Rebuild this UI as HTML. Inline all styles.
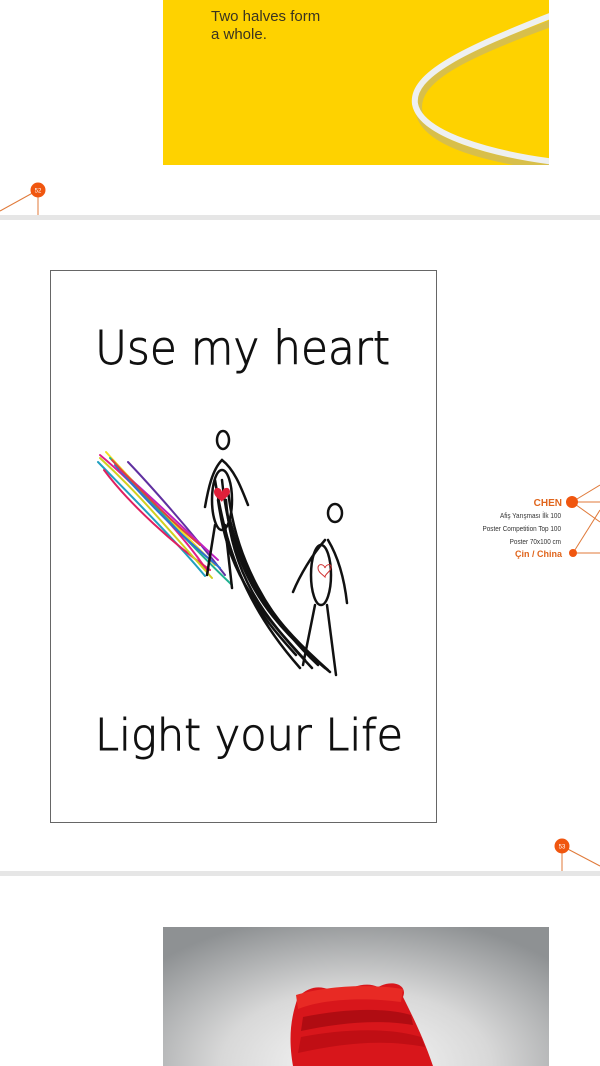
<!DOCTYPE html>
<html><head><meta charset="utf-8"><style>
html,body{margin:0;padding:0;background:#fff;}
body{width:600px;height:1066px;position:relative;overflow:hidden;font-family:"Liberation Sans",sans-serif;}
.abs{position:absolute;}
</style></head><body>
<div class="abs" style="left:163px;top:0;width:386px;height:165px;background:#FED200;overflow:hidden;">
  <div class="abs" style="left:48px;top:8px;font-size:15px;line-height:17.5px;color:#3a3420;">Two halves form<br>a whole.</div>
  <svg class="abs" style="left:0;top:0" width="386" height="165">
    <path d="M392 22 C300 55 250 80 256 112 C262 145 330 160 392 168" fill="none" stroke="#d8bf4a" stroke-width="7"/>
    <path d="M392 14 C300 50 248 75 252 104 C258 135 330 154 392 162" fill="none" stroke="#eef0f0" stroke-width="6"/>
  </svg>
</div>
<svg class="abs" style="left:0;top:180px" width="60" height="40">
  <line x1="38" y1="10" x2="0" y2="31" stroke="#e07a3a" stroke-width="1"/>
  <line x1="38" y1="10" x2="38" y2="36" stroke="#e07a3a" stroke-width="1"/>
  <circle cx="38" cy="10" r="7.5" fill="#f0560f"/>
  <text x="38" y="12.5" font-size="6" fill="#fff" text-anchor="middle" font-family="Liberation Sans">52</text>
</svg>
<div class="abs" style="left:0;top:215px;width:600px;height:5px;background:#e6e6e6;"></div>
<div class="abs" style="left:50px;top:270px;width:385px;height:551px;border:1px solid #666;background:#fff;"></div>
<svg class="abs" style="left:0;top:0" width="600" height="1066">
  <text x="95" y="364" font-size="46" font-family="DejaVu Sans" font-weight="200" textLength="295" lengthAdjust="spacingAndGlyphs" fill="#111" stroke="#111" stroke-width="0.9">Use my heart</text>
  <text x="95" y="750" font-size="44" font-family="DejaVu Sans" font-weight="200" textLength="308" lengthAdjust="spacingAndGlyphs" fill="#111" stroke="#111" stroke-width="0.9">Light your Life</text>
  <g fill="none" stroke-width="2" stroke-linecap="round">
    <path d="M100 455 C130 480 180 530 208 572" stroke="#e0208a"/>
    <path d="M106 452 C140 490 185 535 215 565" stroke="#f0e020"/>
    <path d="M98 462 C135 500 175 540 205 576" stroke="#20a0c0"/>
    <path d="M110 458 C145 495 190 545 232 585" stroke="#20b090"/>
    <path d="M128 462 C150 485 190 530 225 575" stroke="#6030a0"/>
    <path d="M104 470 C130 505 175 545 210 570" stroke="#e02060"/>
    <path d="M115 465 C150 505 180 535 220 568" stroke="#3070d0"/>
    <path d="M120 470 C155 500 185 530 218 560" stroke="#c020c0"/>
    <path d="M112 460 C140 490 170 520 200 545" stroke="#e04040"/>
    <path d="M100 458 C140 495 160 520 212 578" stroke="#d0d020"/>
  </g>
  <g fill="none" stroke="#111" stroke-width="2.5" stroke-linecap="round">
    <ellipse cx="223" cy="440" rx="6" ry="9"/>
    <path d="M222 460 C212 470 208 490 205 507"/>
    <path d="M222 460 C235 470 242 490 248 505"/>
    <ellipse cx="222" cy="500" rx="10" ry="30"/>
    <path d="M215 525 L207 575"/>
    <path d="M225 525 L232 588"/>
    <path d="M215 480 C225 540 240 600 300 668"/>
    <path d="M222 480 C230 560 260 610 328 670"/>
    <path d="M228 490 C235 560 270 620 318 665"/>
    <path d="M218 500 C228 570 250 600 305 660"/>
    <path d="M230 520 C245 580 280 630 325 668"/>
    <path d="M226 500 C232 575 262 615 312 668"/>
    <path d="M234 540 C250 600 290 640 330 672"/>
    <path d="M220 510 C236 580 255 610 296 655"/>
  </g>
  <path d="M214 492 C214 486 221 487 222 492 C223 487 230 486 230 492 C229 497 222 500 222 502 C221 500 214 497 214 492Z" fill="#e0203a"/>
  <g fill="none" stroke="#111" stroke-width="2.5" stroke-linecap="round">
    <ellipse cx="335" cy="513" rx="7" ry="9"/>
    <path d="M325 540 C312 555 300 575 293 592"/>
    <path d="M328 540 C340 560 345 585 347 603"/>
    <ellipse cx="321" cy="575" rx="10" ry="30"/>
    <path d="M315 605 L303 665"/>
    <path d="M327 605 L336 675"/>
  </g>
  <path d="M318 568 C318 563 324 564 325 568 C326 564 332 563 331 568 C330 572 325 574 325 577 C322 574 318 572 318 568Z" fill="none" stroke="#d03030" stroke-width="1"/>
  <g stroke="#e07a3a" stroke-width="1" fill="none">
    <line x1="572" y1="502" x2="600" y2="485"/>
    <line x1="572" y1="502" x2="600" y2="502"/>
    <line x1="572" y1="502" x2="600" y2="522"/>
    <line x1="573" y1="553" x2="600" y2="510"/>
    <line x1="573" y1="553" x2="600" y2="553"/>
    <line x1="562" y1="846" x2="600" y2="866"/>
    <line x1="562" y1="846" x2="562" y2="871"/>
  </g>
  <circle cx="572" cy="502" r="6" fill="#f0560f"/>
  <circle cx="573" cy="553" r="4" fill="#f0560f"/>
  <circle cx="562" cy="846" r="7.5" fill="#f0560f"/>
  <text x="562" y="848.5" font-size="6" fill="#fff" text-anchor="middle" font-family="Liberation Sans">53</text>
  <text x="562" y="506" font-size="10" font-weight="bold" fill="#e0651c" text-anchor="end" font-family="Liberation Sans">CHEN</text>
  <text x="561" y="518" font-size="7.5" fill="#333" text-anchor="end" font-family="Liberation Sans Narrow, Liberation Sans" transform="translate(561 0) scale(0.85 1) translate(-561 0)">Afiş Yarışması İlk 100</text>
  <text x="561" y="531" font-size="7.5" fill="#333" text-anchor="end" font-family="Liberation Sans Narrow, Liberation Sans" transform="translate(561 0) scale(0.85 1) translate(-561 0)">Poster Competition Top 100</text>
  <text x="561" y="544" font-size="7.5" fill="#333" text-anchor="end" font-family="Liberation Sans Narrow, Liberation Sans" transform="translate(561 0) scale(0.85 1) translate(-561 0)">Poster 70x100 cm</text>
  <text x="562" y="557" font-size="9" font-weight="bold" fill="#e0651c" text-anchor="end" font-family="Liberation Sans">Çin / China</text>
</svg>
<div class="abs" style="left:0;top:871px;width:600px;height:5px;background:#e6e6e6;"></div>
<div class="abs" style="left:163px;top:927px;width:386px;height:139px;background:radial-gradient(ellipse 70% 110% at 50% 100%,#fafafa 0%,#d8d8d8 50%,#8e9193 100%);overflow:hidden;">
  <svg class="abs" style="left:0;top:0" width="386" height="139">
    <path d="M135 70 C150 55 165 60 175 68 C190 58 205 55 215 60 C230 52 245 58 240 70 C250 90 260 110 270 139 L130 139 C125 110 128 90 135 70Z" fill="#d8161b"/>
    <path d="M133 68 C160 60 200 56 240 62 L238 75 C200 70 160 72 135 82Z" fill="#e82a24"/>
    <path d="M140 90 C180 82 220 80 248 88 L250 98 C215 92 175 96 138 104Z" fill="#b00c12"/>
    <path d="M138 110 C180 102 225 100 258 110 L262 120 C220 112 180 116 135 126Z" fill="#c00e14"/>
  </svg>
</div>
</body></html>
